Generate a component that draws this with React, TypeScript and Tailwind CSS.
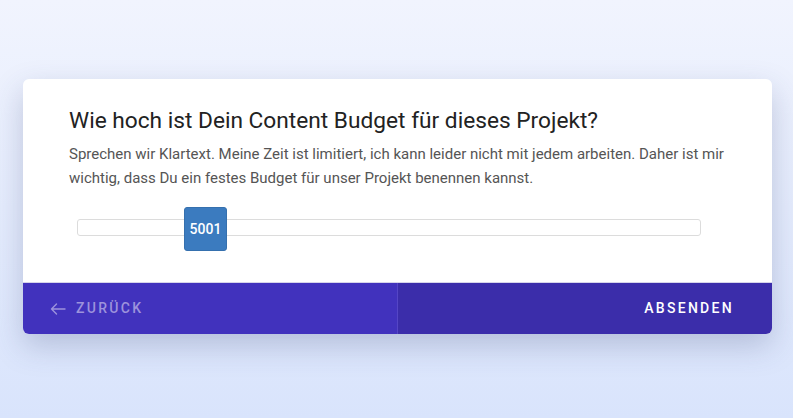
import React from "react";

export default function App() {
  const value = 5001;
  return (
    <div
      className="w-full h-[418px] bg-gradient-to-b from-[#f1f4fe] to-[#d9e4fc] pt-[79px] px-[23px]"
      style={{ fontFamily: "Roboto, 'Noto Sans', sans-serif" }}
    >
      <div className="w-[749px] rounded-[6px] bg-white overflow-hidden shadow-[0_12px_30px_rgba(60,70,120,0.25)]">
        <div className="pl-[46px] pr-[40px] pt-[27px] pb-[46px]">
          <h1 className="text-[22.7px] leading-[30px] text-[#222222] font-normal">
            Wie hoch ist Dein Content Budget für dieses Projekt?
          </h1>
          <p className="mt-[6px] text-[15px] leading-[24px] text-[#555555]">
            Sprechen wir Klartext. Meine Zeit ist limitiert, ich kann leider nicht mit jedem arbeiten. Daher ist mir
            wichtig, dass Du ein festes Budget für unser Projekt benennen kannst.
          </p>
          <div className="relative mt-[29px] ml-[8px] w-[624px] h-[17px] rounded-[3px] border border-[#dcdcdc] bg-white">
            <div className="absolute left-[106px] top-[-13px] w-[43px] h-[44px] rounded-[3px] bg-[#3b7bbf] border border-[#3570ae] flex items-center justify-center text-white text-[14px] font-medium">
              {value}
            </div>
          </div>
        </div>
        <div className="grid grid-cols-2 h-[52px] border-t border-[#d6d4ea]">
          <div className="bg-[#4132bd] flex items-center pl-[27px] border-r border-[#5546c6]">
            <svg width="16" height="12" viewBox="0 0 16 12" className="mr-[10px]">
              <path d="M15 6H1.5M6.5 1L1.5 6l5 5" stroke="#9d93dc" strokeWidth="1.4" fill="none" strokeLinecap="round" strokeLinejoin="round" />
            </svg>
            <span className="text-[14px] font-medium tracking-[2.3px] text-[#9d93dc]">ZURÜCK</span>
          </div>
          <div className="bg-[#3b2daa] flex items-center justify-end pr-[38px]">
            <span className="text-[14px] font-medium tracking-[2.3px] text-white">ABSENDEN</span>
          </div>
        </div>
      </div>
    </div>
  );
}
